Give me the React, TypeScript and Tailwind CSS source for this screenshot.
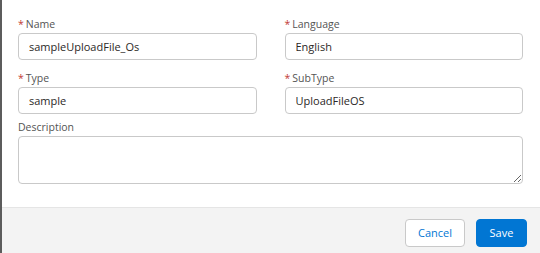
import React from "react";

const Field = ({ label, value, required = true }: { label: string; value: string; required?: boolean }) => (
  <div className="flex flex-col">
    <label className="flex h-[14px] items-center text-[10.5px] leading-[14px] text-[#545454]">
      {required && <span className="mr-[2px] text-[#c23934]">*</span>}
      {label}
    </label>
    <input
      readOnly
      value={value}
      className="mt-[2px] h-[27px] rounded-[4px] border border-[#c9c9c9] bg-white px-[10px] text-[11px] text-[#2b2826] outline-none"
    />
  </div>
);

export default function App() {
  return (
    <div
      className="flex h-[253px] w-[540px] overflow-hidden bg-white"
      style={{ fontFamily: '"Open Sans", "Noto Sans", sans-serif' }}
    >
      <div className="w-[2px] bg-[#5c5c5c]" />
      <div className="flex flex-1 flex-col">
        <div className="flex-1 pl-[16px] pr-[17px] pt-[17px]">
          <div className="grid grid-cols-2 gap-x-[28px] gap-y-[11px]">
            <Field label="Name" value="sampleUploadFile_Os" />
            <Field label="Language" value="English" />
            <Field label="Type" value="sample" />
            <Field label="SubType" value="UploadFileOS" />
          </div>
          <div className="mt-[6px] flex flex-col">
            <label className="h-[14px] text-[10.5px] leading-[14px] text-[#545454]">Description</label>
            <textarea className="mt-[2px] h-[48px] rounded-[4px] border border-[#c9c9c9] bg-white px-[10px] text-[11px] outline-none" />
          </div>
        </div>
        <div className="flex h-[46px] justify-end gap-[11px] border-t border-[#e5e5e5] bg-[#f3f3f3] pr-[13px] pt-[11px]">
          <button className="h-[28px] w-[60px] rounded-[4px] border border-[#c9c9c9] bg-white text-[11px] text-[#0176d3]">
            Cancel
          </button>
          <button className="h-[28px] w-[51px] rounded-[4px] border border-[#0176d3] bg-[#0176d3] text-[11px] text-white">
            Save
          </button>
        </div>
      </div>
    </div>
  );
}
